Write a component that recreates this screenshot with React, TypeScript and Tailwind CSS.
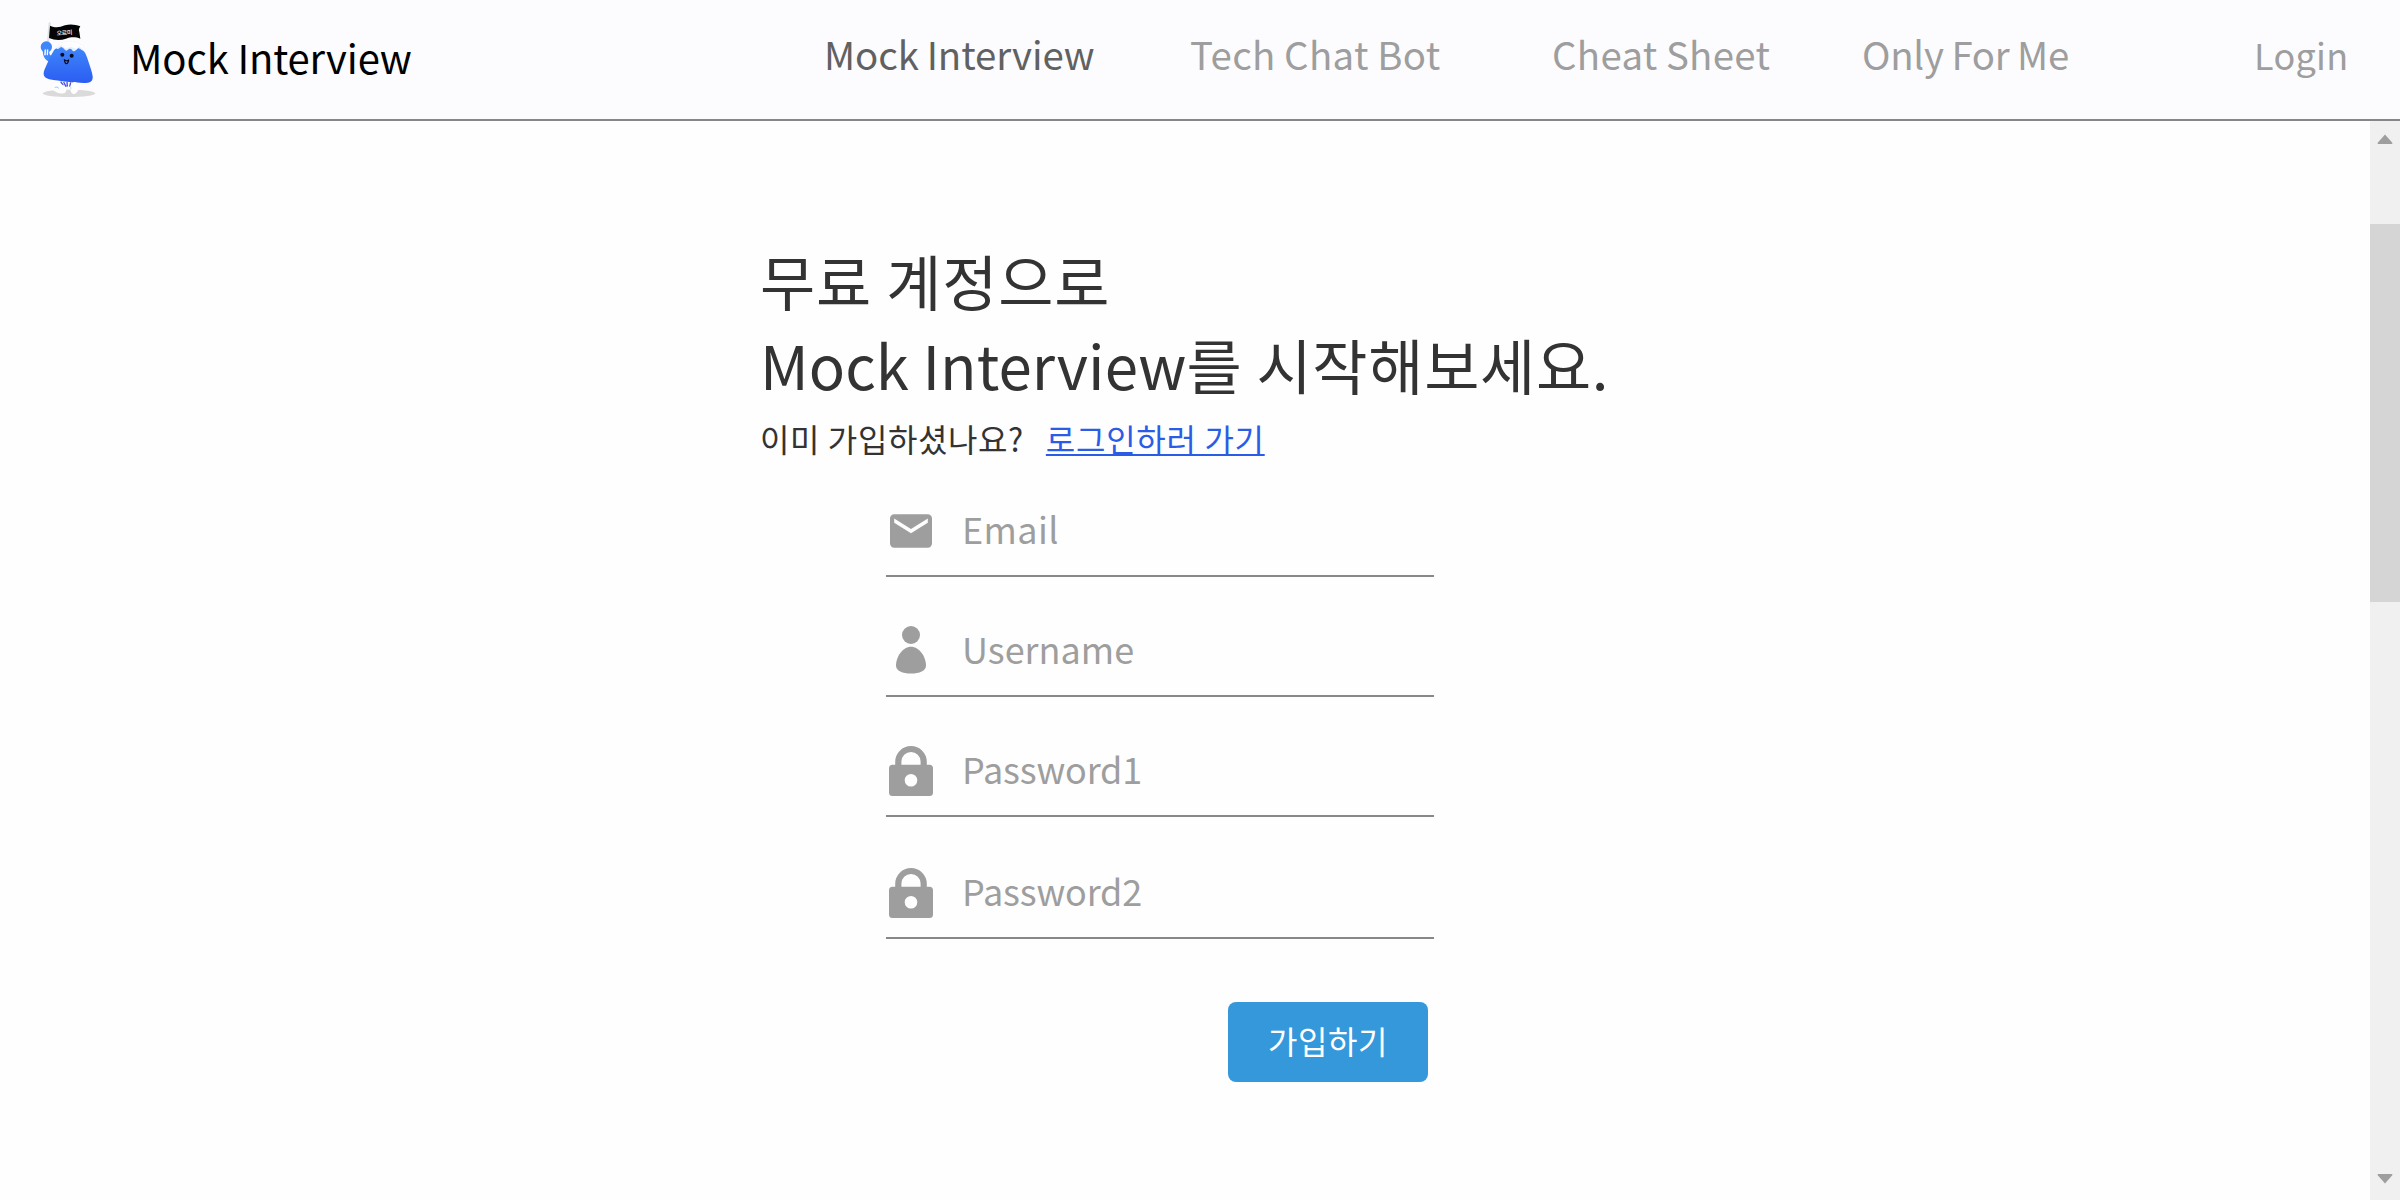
import React from 'react';

function Mascot() {
  return (
    <svg className="h-[100px] w-[100px] shrink-0" viewBox="0 0 300 300">
      <defs>
        <linearGradient id="body" x1="0" y1="0" x2="0" y2="1">
          <stop offset="0" stopColor="#3f86fb" />
          <stop offset="1" stopColor="#2b5df2" />
        </linearGradient>
      </defs>
      <ellipse cx="147" cy="250" rx="79" ry="11" fill="#dadada" />
      <path d="M89 40 L82 122" stroke="#e2e2e2" strokeWidth="7" strokeLinecap="round" />
      <path d="M90 47 C108 55 118 52 135 46 C152 41 166 44 181 49 C176 57 176 60 178 66 C179 73 180 79 181 86 C168 81 154 80 138 86 C121 92 103 91 87 84 Z" fill="#050505" />
      <text x="110" y="75" fontSize="18" fontWeight="500" fill="#fff" textLength="47" transform="rotate(-3 133 68)" className="font-['Noto_Sans_CJK_KR',sans-serif]">오르미</text>
      <path d="M78 118 C77 138 82 146 99 149" fill="none" stroke="#4189fb" strokeWidth="19" strokeLinecap="round" />
      <path d="M104 118 C114 100 130 94 150 94 C172 94 188 103 196 122 L170 136 L120 132 Z" fill="#fff" stroke="#f1f3f8" strokeWidth="2" />
      <path d="M115 113 C124 105 130 113 138 120 C145 113 152 112 160 123 C167 117 173 110 179 115 C192 119 199 134 204 151 C210 170 216 184 218 199 C219 213 212 219 198 219 C170 220 122 214 88 208 C70 203 68 193 74 178 C82 160 92 136 102 121 C106 116 110 113 115 113 Z" fill="url(#body)" />
      <path d="M109 117 C124 98 166 94 191 120 C184 126 178 108 171 118 C166 124 160 126 156 119 C150 109 143 124 138 122 C130 117 126 107 120 113 C116 116 113 118 109 117 Z" fill="#e4eefc" />
      <path d="M124 105 C138 95 164 96 177 110 C172 116 166 119 159 113 C151 106 143 118 137 115 C131 112 128 108 124 105 Z" fill="#fdfdff" />
      <circle cx="79" cy="111" r="17" fill="#3f86fb" />
      <path d="M76 120 L75 134" stroke="#e9effa" strokeWidth="5" strokeLinecap="round" />
      <path d="M83 120 L82 134" stroke="#fff" strokeWidth="4" strokeLinecap="round" />
      <circle cx="127" cy="134" r="6" fill="#080b1a" />
      <circle cx="155" cy="137" r="6" fill="#080b1a" />
      <path d="M133 149 C137 153 142 153 146 150 C145 157 142 161 139 161 C136 161 134 156 133 149 Z" fill="#6a8fff" stroke="#0a0d20" strokeWidth="3.5" strokeLinejoin="round" />
      <path d="M122 215 L130 226 M131 216 L138 230 M141 216 L142 230 M152 217 L149 230" stroke="#4a4fe0" strokeWidth="4" />
      <ellipse cx="117" cy="235" rx="23" ry="14" transform="rotate(24 117 235)" fill="#fff" />
      <ellipse cx="163" cy="234" rx="12" ry="18" transform="rotate(6 163 234)" fill="#fff" />
      <path d="M104 232 L111 231 L117 235" fill="none" stroke="#8fd0f5" strokeWidth="3" />
      <path d="M152 230 L153 238" stroke="#8fd0f5" strokeWidth="2" />
    </svg>
  );
}

/* Every field icon is drawn on a 50×56 canvas. */
function MailIcon() {
  return (
    <svg className="h-14 w-[50px]" viewBox="0 0 50 56" fill="#9e9e9e">
      <path fillRule="evenodd" d="M8.2 11.200h33.600a4.200 4.200 0 0 1 4.200 4.200v25.200a4.200 4.200 0 0 1-4.200 4.200H8.200a4.200 4.200 0 0 1-4.200-4.200V15.400a4.200 4.200 0 0 1 4.200-4.200Z M8.200 15.600v4.200L25 30.300l16.800-10.500v-4.200L25 26.100Z" />
    </svg>
  );
}

function UserIcon() {
  return (
    <svg className="h-14 w-[50px]" viewBox="0 0 50 56" fill="#9e9e9e">
      <circle cx="25" cy="12" r="9" />
      <path d="M25 23.700C33.500 23.700 40 34 40 42.500C40 48 33.500 50.500 25 50.500S10 48 10 42.500C10 34 16.500 23.700 25 23.700Z" />
    </svg>
  );
}

function LockIcon() {
  return (
    <svg className="h-14 w-[50px]" viewBox="0 0 50 56" fill="#9e9e9e">
      <path fillRule="evenodd" d="M9.200 21.700V18.800a15.800 15.800 0 0 1 31.600 0V21.700h2.700a3.500 3.500 0 0 1 3.500 3.500V49.500a3.500 3.500 0 0 1-3.500 3.500H6.500a3.500 3.500 0 0 1-3.500-3.500V25.200a3.500 3.500 0 0 1 3.500-3.500Z M15.400 21.700H34.600V18.600a9.600 9.600 0 0 0-19.200 0Z M25 31a6.300 6.300 0 1 0 0 12.600a6.300 6.300 0 1 0 0-12.600Z" />
    </svg>
  );
}

const fields = [
  { label: 'Email', icon: <MailIcon />, spacing: 'h-[82px] tracking-[0.4px]' },
  { label: 'Username', icon: <UserIcon />, spacing: 'mt-[38px] h-[82px]' },
  { label: 'Password1', icon: <LockIcon />, spacing: 'mt-[38px] h-[82px] tracking-[-0.15px]' },
  { label: 'Password2', icon: <LockIcon />, spacing: 'mt-10 h-[82px] tracking-[-0.15px]' },
];

export default function App() {
  return (
    <div className="flex h-[1200px] w-[2400px] flex-col overflow-hidden bg-[#fefefe] font-['Noto_Sans_CJK_KR',sans-serif]">
      <header className="flex h-[121px] shrink-0 items-start border-b-2 border-[#868688] bg-[#fcfcff] pl-5 whitespace-nowrap">
        <div className="flex w-[804px] items-start pt-[10px]">
          <Mascot />
          <h1 className="mt-[17px] ml-[10px] text-[40px] leading-[60px] tracking-[-0.15px] text-black">Mock Interview</h1>
        </div>
        <nav className="flex pt-[23px] text-[38.4px] leading-[60px] text-[#9e9e9e] [word-spacing:-0.6px]">
          <a className="w-[366px] tracking-[-0.1px] text-[#616161]">Mock Interview</a>
          <a className="w-[362px] tracking-[0.36px]">Tech Chat Bot</a>
          <a className="w-[310px] tracking-[0.32px]">Cheat Sheet</a>
          <a className="w-[392px] tracking-[-0.28px]">Only For Me</a>
        </nav>
        <a className="pt-6 text-[36px] leading-[60px] tracking-[0.3px] text-[#9e9e9e]">Login</a>
      </header>

      <div className="flex min-h-0 flex-1">
        <main className="flex-1 pl-[760px] whitespace-nowrap">
          <h2 className="pt-[117px] text-[60px] leading-[84px] tracking-[0.8px] text-[#333]">
            무료 계정으로
            <br />
            <span className="tracking-[0.04px]">Mock Interview</span>
            <span className="tracking-[0.7px]">를 시작해보세요.</span>
          </h2>
          <p className="mt-2 flex h-12 text-[32px] leading-[48px] tracking-[0.6px] text-[#333]">
            <span>이미 가입하셨나요?</span>
            <a className="ml-[22px] tracking-[0.7px] text-[#2b5ce6] underline decoration-2 underline-offset-[2px]">로그인하러 가기</a>
          </p>
          <form className="mt-[33px] ml-[126px] w-[548px]">
            {fields.map((f) => (
              <label key={f.label} className={`flex items-start border-b-2 border-[#888] text-[36px] text-[#9e9e9e] ${f.spacing}`}>
                <span className="mt-2">{f.icon}</span>
                <span className="ml-[26px] pt-[3px] leading-[60px]">{f.label}</span>
              </label>
            ))}
            <button type="button" className="mt-[63px] ml-[342px] flex h-20 w-[200px] items-center justify-center rounded-lg bg-[#3498db] pb-1 text-[32px] tracking-[0.56px] text-white">
              가입하기
            </button>
          </form>
        </main>

        <aside className="flex w-[30px] flex-col items-center bg-[#f0f0f0]">
          <svg className="mt-[13px] h-[10px] w-4" viewBox="0 0 16 10" fill="#9e9e9e">
            <path d="M8 0.500L15.500 9Q15.500 10 14.500 10H1.500Q0.500 10 0.500 9Z" />
          </svg>
          <div className="mt-20 h-[378px] w-full bg-[#d5d5d5]" />
          <svg className="mt-auto mb-4 h-[10px] w-4" viewBox="0 0 16 10" fill="#9e9e9e">
            <path d="M8 9.500L15.500 1Q15.500 0 14.500 0H1.500Q0.500 0 0.500 1Z" />
          </svg>
        </aside>
      </div>
    </div>
  );
}
